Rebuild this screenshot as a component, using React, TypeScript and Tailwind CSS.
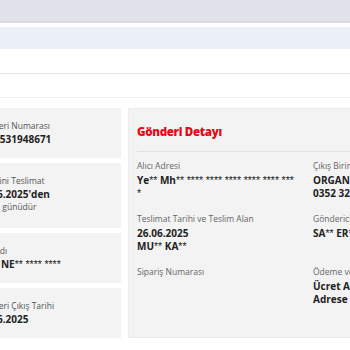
const sideCards = [
  { label: "Gönderi Numarası", value: "2725531948671", h: "h-[50px]" },
  { label: "Tahmini Teslimat", value: "26.06.2025'den", note: "Cuma günüdür", h: "h-[65px]" },
  { label: "Alıcı adı", value: "AY** NE** **** ****", h: "h-[50px]" },
  { label: "Gönderi Çıkış Tarihi", value: "25.06.2025", h: "h-[50px]" },
];

// asterisk runs are drawn lighter, as in the masked values of the original
function Masked({ text }: { text: string }) {
  return (
    <>
      {text.split(/(\*+)/).map((part, i) =>
        part.startsWith("*") ? (
          <span key={i} className="font-['Liberation_Sans',sans-serif] text-[10.5px] font-normal">
            {part}
          </span>
        ) : (
          <span key={i}>{part}</span>
        ),
      )}
    </>
  );
}

function Field({ label, lines }: { label: string; lines: string[] }) {
  return (
    <div>
      <p className="text-[8.5px] leading-[12px] text-[#666]">{label}</p>
      <div className="mt-[2px] text-[10px] font-bold leading-[13px] text-[#222]">
        {lines.map((l) => (
          <p key={l}>
            <Masked text={l} />
          </p>
        ))}
      </div>
    </div>
  );
}

export default function App() {
  return (
    <div className="h-[350px] w-[350px] overflow-hidden bg-white font-['Open_Sans',sans-serif]">
      {/* top bars */}
      <div className="h-[23px] border-b-2 border-[#d8dbe2] bg-[#dfe2e9]" />
      <div className="mt-[4px] h-[22px] bg-[#ecf0f9]" />
      <div className="h-[25px] border-b border-[#e6e6e6]" />
      <div className="h-[24px] border-b border-[#efefef]" />

      <div className="ml-[-33px] flex w-[600px] gap-[7px] pt-[10px]">
        {/* left column */}
        <div className="flex w-[154px] shrink-0 flex-col gap-[5px]">
          {sideCards.map((c) => (
            <div key={c.label} className={`${c.h} whitespace-nowrap bg-[#f3f3f3] pl-[10px] pt-[12px]`}>
              <p className="text-[8.5px] leading-[12px] text-[#555]">{c.label}</p>
              <p className="text-[10px] font-bold leading-[14px] text-[#222]">
                <Masked text={c.value} />
              </p>
              {c.note && <p className="text-[8.5px] leading-[12px] text-[#555]">{c.note}</p>}
            </div>
          ))}
        </div>

        {/* Gönderi Detayı */}
        <div className="h-[230px] flex-1 border border-[#ececec] bg-[#f3f3f3] px-[8px] pt-[16px]">
          <h2 className="text-[11.5px] font-extrabold leading-[14px] tracking-tight text-[#e30a17]">
            Gönderi Detayı
          </h2>
          <div className="mt-[12px] w-[420px] border-t border-[#e2e2e2]" />
          <div className="mt-[8px] grid grid-cols-[158px_18px_250px] gap-y-[13px] whitespace-nowrap">
            <div className="whitespace-normal">
              <Field label="Alıcı Adresi" lines={["Ye** Mh** **** **** **** **** **** *** *"]} />
            </div>
            <div />
            <Field label="Çıkış Birimi" lines={["ORGANİZE SANAYİ", "0352 321 00 00"]} />
            <Field label="Teslimat Tarihi ve Teslim Alan" lines={["26.06.2025", "MU** KA**"]} />
            <div />
            <Field label="Gönderici" lines={["SA** ER**"]} />
            <Field label="Sipariş Numarası" lines={[]} />
            <div />
            <Field label="Ödeme ve Teslim Şekli" lines={["Ücret Alıcıdan", "Adrese Teslim"]} />
          </div>
        </div>
      </div>
    </div>
  );
}
